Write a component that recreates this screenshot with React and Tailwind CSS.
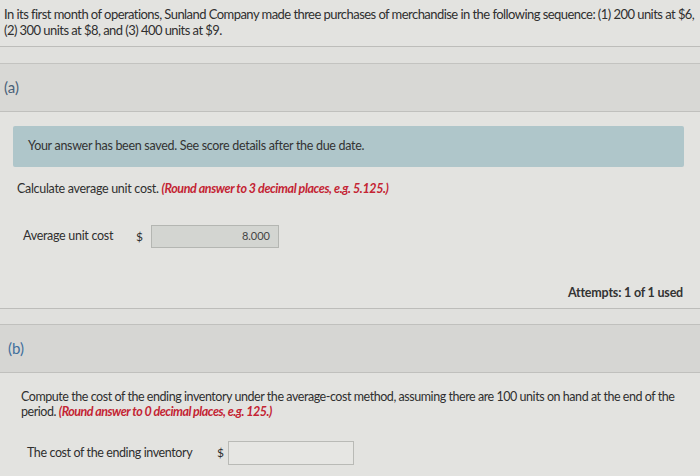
export default function App() {
  return (
    <div className="w-[700px] h-[476px] overflow-hidden bg-[#e3e3e0] text-[#2f2f2f] font-['Lato',sans-serif]">
      <div className="h-[47px] border-b border-[#bdbdba] px-[4px] pt-[6px] text-[13px] leading-[16px] tracking-[-0.55px] whitespace-nowrap">
        <p>In its first month of operations, Sunland Company made three purchases of merchandise in the following sequence: (1) 200 units at $6,</p>
        <p>(2) 300 units at $8, and (3) 400 units at $9.</p>
      </div>
      <div className="h-[17px] border-b border-[#c3c3c0] bg-[#e0e0dd]" />
      <div className="h-[48px] border-b border-[#c0c0bd] bg-[#d8d8d5] flex items-center px-[4px]">
        <span className="text-[15px] text-[#4a6178]">(a)</span>
      </div>
      <div className="px-[13px] pt-[14px]">
        <div className="h-[41px] w-[671px] rounded-[2px] bg-[#afc6ca] flex items-center pl-[15px] text-[12.5px] tracking-[-0.3px] text-[#333]">
          Your answer has been saved. See score details after the due date.
        </div>
      </div>
      <div className="px-[17px] pt-[14px] text-[12.5px] tracking-[-0.3px] leading-[16px]">
        Calculate average unit cost.{" "}
        <span className="text-[#c42433] font-bold italic tracking-[-0.4px]">(Round answer to 3 decimal places, e.g. 5.125.)</span>
      </div>
      <div className="flex items-center pl-[23px] pt-[28px]">
        <span className="text-[12.5px] tracking-[-0.3px] w-[113px]">Average unit cost</span>
        <span className="text-[12px] w-[15px]">$</span>
        <div className="w-[128px] h-[23px] bg-[#d3d5d1] border border-[#b4b6b2] flex items-center justify-end pr-[8px] text-[11px] text-[#444]">
          8.000
        </div>
      </div>
      <div className="flex justify-end pr-[17px] pt-[36px] text-[12.5px] font-bold tracking-[-0.2px] text-[#333] h-[60px]">
        Attempts: 1 of 1 used
      </div>
      <div className="border-t border-[#bdbdba] h-[17px] bg-[#e0e0dd] border-b border-b-[#c0c0bd]" />
      <div className="h-[48px] border-b border-[#c0c0bd] bg-[#d6d6d3] flex items-center px-[8px]">
        <span className="text-[15px] text-[#3f6f9c]">(b)</span>
      </div>
      <div className="px-[21px] pt-[16px] text-[12.5px] leading-[15px] tracking-[-0.45px] whitespace-nowrap">
        <p>Compute the cost of the ending inventory under the average-cost method, assuming there are 100 units on hand at the end of the</p>
        <p>
          period.{" "}
          <span className="text-[#c42433] font-bold italic tracking-[-0.5px]">(Round answer to 0 decimal places, e.g. 125.)</span>
        </p>
      </div>
      <div className="flex items-center pl-[27px] pt-[22px]">
        <span className="text-[12.5px] tracking-[-0.4px] w-[190px]">The cost of the ending inventory</span>
        <span className="text-[12px] w-[11px]">$</span>
        <div className="w-[126px] h-[24px] bg-[#e6e6e3] border border-[#b9bab6]" />
      </div>
    </div>
  );
}
